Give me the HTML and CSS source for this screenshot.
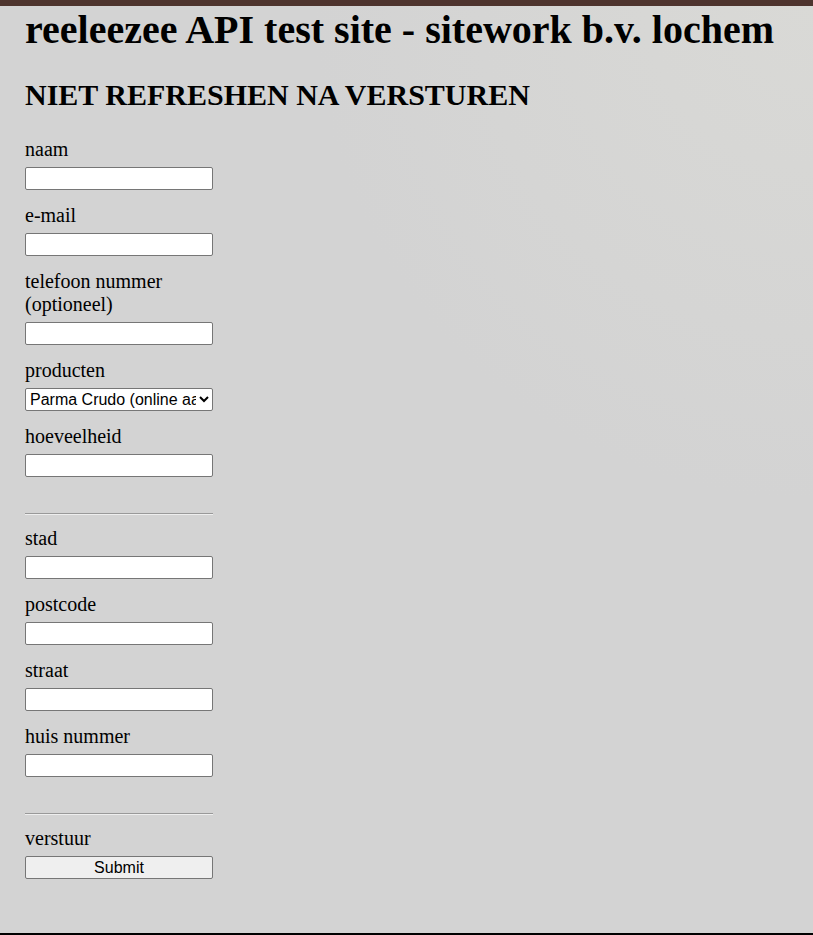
FILE: index.html
```html
<!DOCTYPE html>
<html lang="nl">
<head>
<meta charset="UTF-8" />
<meta name="viewport" content="width=device-width, initial-scale=1" />
<title>reeleezee API test site</title>
<link rel="stylesheet" href="styles.css">
</head>
<body>
  <h1>reeleezee API test site - sitework b.v. lochem</h1>
  <h2>NIET REFRESHEN NA VERSTUREN</h2>

  <form class="order-form" onsubmit="return false;">
    <label for="naam">naam</label>
    <input type="text" id="naam" name="naam" />

    <label for="email">e-mail</label>
    <input type="email" id="email" name="email" />

    <label for="telefoon">telefoon nummer (optioneel)</label>
    <input type="text" id="telefoon" name="telefoon" />

    <label for="product">producten</label>
    <select id="product" name="product">
      <option>Parma Crudo (online aankoop)</option>
    </select>

    <label for="aantal">hoeveelheid</label>
    <input type="text" id="aantal" name="aantal" />

    <hr />

    <label for="stad">stad</label>
    <input type="text" id="stad" name="stad" />

    <label for="postcode">postcode</label>
    <input type="text" id="postcode" name="postcode" />

    <label for="straat">straat</label>
    <input type="text" id="straat" name="straat" />

    <label for="huisnummer">huis nummer</label>
    <input type="text" id="huisnummer" name="huisnummer" />

    <hr />

    <label for="verstuur">verstuur</label>
    <input type="submit" id="verstuur" value="Submit" />
  </form>
</body>
</html>
```

FILE: styles.css
```css
body {
  margin: 0;
  padding: 0 25px;
  min-height: 100vh;
  box-sizing: border-box;
  font-family: "Liberation Serif", "Times New Roman", serif;
  font-size: 20px;
  color: #000;
  background: radial-gradient(circle at 100% 0, #d9d9d6 0, #d3d3d3 500px) #d3d3d3;
  border-top: 6px solid #4e342e;
  border-bottom: 2px solid #000;
}
h1 {
  font-size: 40px;
  margin: 0 0 25px;
}
h2 {
  font-size: 30px;
  margin: 0 0 26px;
}
.order-form {
  display: flex;
  flex-direction: column;
  width: 188px;
}
.order-form label {
  margin-bottom: 6px;
}
.order-form input,
.order-form select {
  height: 23px;
  box-sizing: border-box;
  margin: 0 0 14px;
  font-family: "Liberation Sans", Arial, sans-serif;
  font-size: 16px;
  border: 1px solid #767676;
  border-radius: 2px;
  background: #fff;
}
.order-form input[type="text"],
.order-form input[type="email"] {
  padding: 1px 2px;
}
.order-form input[type="submit"] {
  background: #efefef;
  color: #000;
  padding: 0;
}
.order-form hr {
  width: 100%;
  box-sizing: border-box;
  margin: 22px 0 12px;
  border: 0;
  border-top: 1px solid #999;
  border-bottom: 1px solid #eee;
}
```
